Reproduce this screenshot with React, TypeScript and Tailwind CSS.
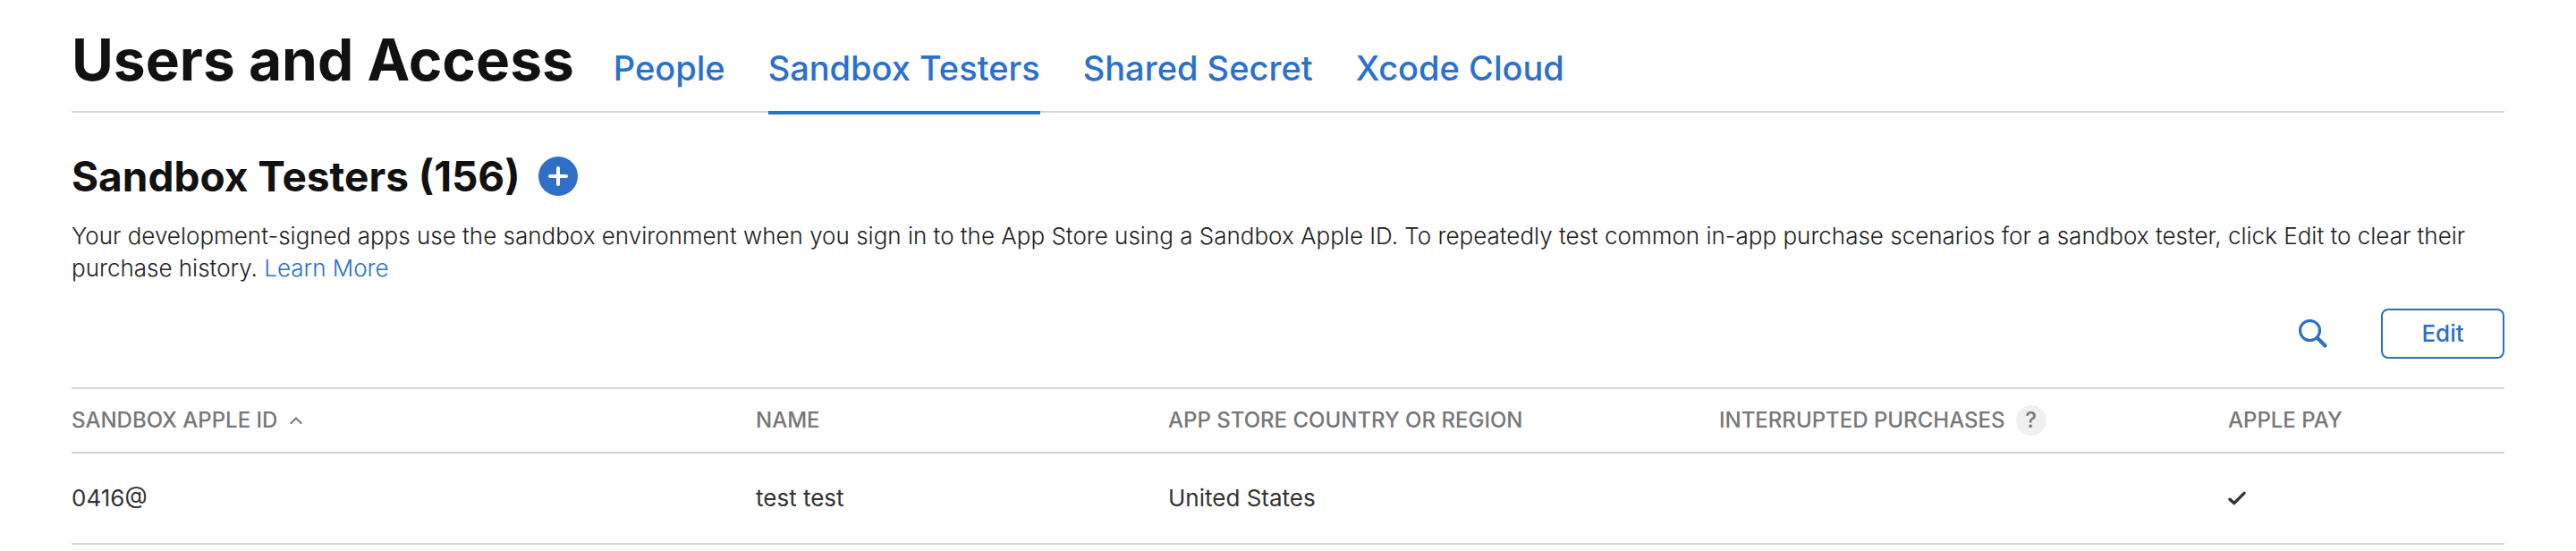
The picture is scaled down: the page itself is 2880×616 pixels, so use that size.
const tabs = ['People', 'Sandbox Testers', 'Shared Secret', 'Xcode Cloud'];

const testers = [
  { id: '0416@', name: 'test test', region: 'United States', interrupted: false, applePay: true },
];

function Check() {
  return (
    <svg className="h-4 w-5" viewBox="0 0 20 16" fill="none" stroke="currentColor" strokeWidth="3.4" strokeLinecap="round" strokeLinejoin="round" role="img" aria-label="Yes">
      <path d="M2 9.2 6.8 13.6 18 2.4" />
    </svg>
  );
}

export default function App() {
  const active = 'Sandbox Testers';
  return (
    <main className="bg-white px-20 font-['Inter','Liberation_Sans',sans-serif] text-[26px] leading-9 text-[#333]">
      <header className="flex h-[126px] items-baseline border-b-2 border-[#d6d6d6] pt-[25px]">
        <h1 className="mr-11 text-[64px] leading-[84px] font-bold text-[#111]">Users and Access</h1>
        <nav className="flex gap-12 text-[38px] font-medium text-[#2a70cf]">
          {tabs.map((tab) => (
            <a
              key={tab}
              href="#"
              aria-current={tab === active ? 'page' : undefined}
              className={tab === active ? 'border-b-4 border-[#2a70cf] pb-6 leading-[48px]' : 'leading-[48px]'}
            >
              {tab}
            </a>
          ))}
        </nav>
      </header>

      <section>
        <div className="flex items-center gap-5 pt-[41px]">
          <h2 className="text-[46px] leading-[60px] font-bold text-[#111]">Sandbox Testers (156)</h2>
          <button type="button" aria-label="Add sandbox tester" className="flex size-11 items-center justify-center rounded-full bg-[#2f6fc5] text-white">
            <svg className="size-[22px]" viewBox="0 0 22 22" stroke="currentColor" strokeWidth="4" strokeLinecap="round" aria-hidden="true">
              <path d="M11 2v18M2 11h18" />
            </svg>
          </button>
        </div>
        <p className="mt-[19px] font-[340] text-[#222]">
          Your development-signed apps use the sandbox environment when you sign in to the App Store using a Sandbox Apple ID. To repeatedly test common in-app purchase scenarios for a sandbox tester, click Edit to clear their purchase history.{' '}
          <a href="#" className="text-[#2a70cf]">Learn More</a>
        </p>

        <div className="mt-[27px] flex items-center justify-end gap-[60px] text-[#2f6fc5]">
          <button type="button" aria-label="Search">
            <svg className="size-8" viewBox="0 0 32 32" fill="none" stroke="currentColor" strokeLinecap="round" aria-hidden="true">
              <circle cx="12.5" cy="12.5" r="11" strokeWidth="3.2" />
              <path d="M21 21l8.5 8.5" strokeWidth="4.2" />
            </svg>
          </button>
          <button type="button" className="h-14 w-[138px] rounded-lg border-2 border-[#2f6fc5] font-medium">Edit</button>
        </div>

        <table className="mt-8 w-full table-fixed border-collapse text-left">
          <colgroup>
            <col className="w-[28.125%]" />
            <col className="w-[16.949%]" />
            <col className="w-[22.647%]" />
            <col className="w-[20.919%]" />
            <col />
          </colgroup>
          <thead className="text-2xl text-[#777]">
            <tr className="h-[72px] border-y-2 border-[#d6d6d6]">
              <th scope="col" aria-sort="ascending" className="p-0 font-medium">
                <button type="button" className="flex items-center gap-3.5">
                  SANDBOX APPLE ID
                  <svg className="h-2 w-3.5" viewBox="0 0 14 8" fill="none" stroke="currentColor" strokeWidth="2" strokeLinecap="round" strokeLinejoin="round" aria-hidden="true">
                    <path d="M1.5 7 7 1.5 12.5 7" />
                  </svg>
                </button>
              </th>
              <th scope="col" className="p-0 font-medium">NAME</th>
              <th scope="col" className="p-0 font-medium">APP STORE COUNTRY OR REGION</th>
              <th scope="col" className="p-0 font-medium">
                <span className="flex items-center gap-3">
                  INTERRUPTED PURCHASES
                  <button type="button" aria-label="About interrupted purchases" className="flex size-[34px] items-center justify-center rounded-full bg-[#f0f0f0]">?</button>
                </span>
              </th>
              <th scope="col" className="p-0 font-medium">APPLE PAY</th>
            </tr>
          </thead>
          <tbody>
            {testers.map((t) => (
              <tr key={t.id} className="h-[102px] border-b-2 border-[#d6d6d6]">
                <td className="p-0">{t.id}</td>
                <td className="p-0">{t.name}</td>
                <td className="p-0">{t.region}</td>
                <td className="p-0">{t.interrupted && <Check />}</td>
                <td className="p-0">{t.applePay && <Check />}</td>
              </tr>
            ))}
          </tbody>
        </table>
      </section>
    </main>
  );
}
